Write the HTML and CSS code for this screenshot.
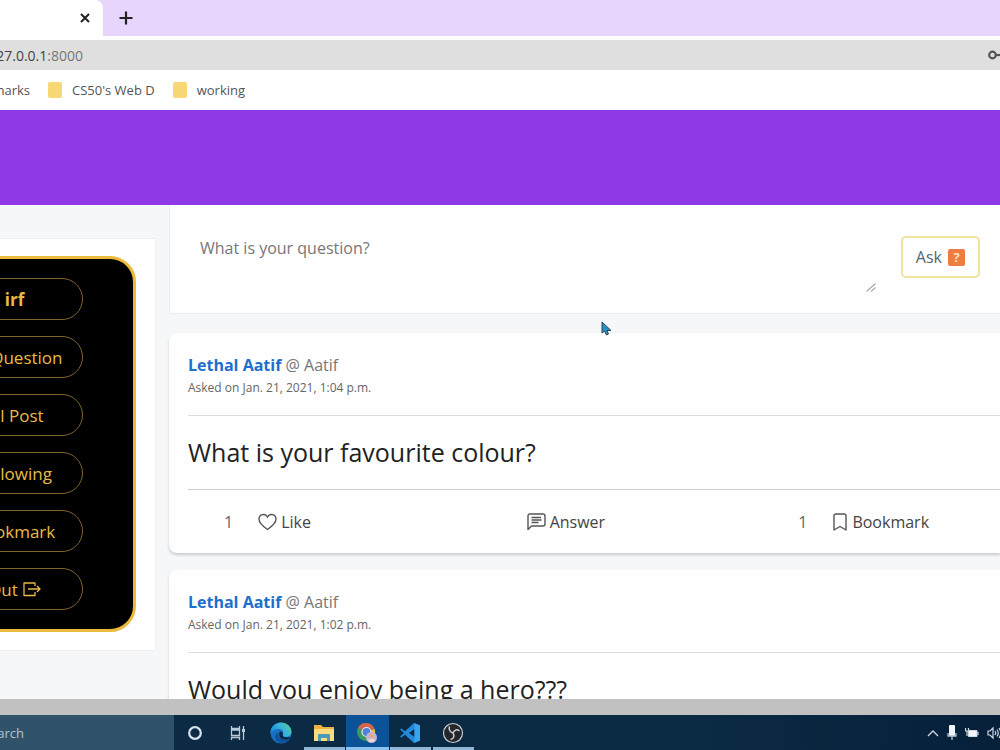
FILE: index.html
```html
<!DOCTYPE html>
<html lang="en">
<head>
    <meta charset="utf-8">
    <title>Questions</title>
    <link rel="stylesheet" href="styles.css">
</head>
<body>
    <header class="browser">
        <div class="tabs">
            <div class="tab">
                <button type="button" class="tab-btn" aria-label="Close tab">
                    <svg width="10" height="10" viewBox="0 0 10 10"><path d="M1 1l8 8M9 1L1 9" stroke="#222" stroke-width="2"/></svg>
                </button>
            </div>
            <button type="button" class="tab-btn new-tab" aria-label="New tab">
                <svg width="14" height="14" viewBox="0 0 14 14"><path d="M7 0.500v13M0.500 7h13" stroke="#222" stroke-width="2.200"/></svg>
            </button>
        </div>
        <div class="address">
            <div class="url"><span>127.0.0.1<span class="port">:8000</span></span></div>
            <svg width="13" height="14" viewBox="0 0 13 14" fill="none" stroke="#555" stroke-width="2.200"><circle cx="5.500" cy="7" r="3.300"/><path d="M9 7h5"/></svg>
        </div>
        <nav class="bookmarks">
            <a href="#" class="cut">Bookmarks</a>
            <a href="#"><i class="folder"></i>CS50's Web D</a>
            <a href="#"><i class="folder"></i>working</a>
        </nav>
    </header>

    <div class="navbar"></div>

    <div class="page">
        <aside class="sidebar">
            <nav class="menu">
                <a href="#" class="user">irf</a>
                <a href="#">All Question</a>
                <a href="#">All Post</a>
                <a href="#">Following</a>
                <a href="#">Bookmark</a>
                <a href="#">Out
                    <svg width="18" height="16" viewBox="0 0 18 16" fill="none" stroke="#e9bb45" stroke-width="1.300" stroke-linejoin="round"><path d="M12 5V2H1v12.500h11V11M5 8h12M14 5l3 3-3 3"/></svg>
                </a>
            </nav>
        </aside>

        <main class="feed">
            <form class="ask">
                <textarea placeholder="What is your question?" aria-label="Question"></textarea>
                <svg class="grip" width="10" height="10" viewBox="0 0 10 10"><path d="M0.500 9.500l9-8M5 9.500l4.500-4" stroke="#aaa" stroke-width="1.200"/></svg>
                <button type="button" class="ask-btn">Ask <span class="mark">?</span></button>
            </form>

            <article class="card">
                <div class="card-head">
                    <div class="author"><a href="#">Lethal Aatif</a> @ Aatif</div>
                    <div class="date">Asked on Jan. 21, 2021, 1:04 p.m.</div>
                </div>
                <h2>What is your favourite colour?</h2>
                <div class="actions">
                    <div class="action">
                        <span class="count">1</span>
                        <button type="button">
                            <svg width="19" height="18" viewBox="0 0 19 18" fill="none" stroke="#555" stroke-width="1.400"><path d="M9.500 16.500C4.500 13 1 10 1 6c0-5 6.500-6 8.500-2C11.500 0 18 1 18 6c0 4-3.500 7-8.500 10.500z"/></svg>
                            Like
                        </button>
                    </div>
                    <div class="action">
                        <button type="button">
                            <svg width="19" height="18" viewBox="0 0 19 18" fill="none" stroke="#555" stroke-width="1.400" stroke-linejoin="round"><path d="M1 16.500V3q0-2 2-2h13q2 0 2 2v8q0 2-2 2H4.500zM4.500 4.500h9.500M4.500 7h10M4.500 9.500h7"/></svg>
                            Answer
                        </button>
                    </div>
                    <div class="action">
                        <span class="count">1</span>
                        <button type="button">
                            <svg width="16" height="18" viewBox="0 0 16 18" fill="none" stroke="#555" stroke-width="1.400" stroke-linejoin="round"><path d="M2 17V3q0-2 2-2h8q2 0 2 2v14l-6-3.500z"/></svg>
                            Bookmark
                        </button>
                    </div>
                </div>
            </article>

            <article class="card">
                <div class="card-head">
                    <div class="author"><a href="#">Lethal Aatif</a> @ Aatif</div>
                    <div class="date">Asked on Jan. 21, 2021, 1:02 p.m.</div>
                </div>
                <h2>Would you enjoy being a hero???</h2>
            </article>
        </main>
    </div>

    <div class="scrollbar"></div>

    <footer class="taskbar">
        <div class="search"><span>Search</span></div>
        <button type="button" class="app" aria-label="Cortana">
            <svg width="16" height="16" viewBox="0 0 16 16"><circle cx="8" cy="8" r="5.800" fill="none" stroke="#d5e3ee" stroke-width="2.200"/></svg>
        </button>
        <button type="button" class="app" aria-label="Task view">
            <svg width="16" height="16" viewBox="0 0 16 16" fill="none" stroke="#b8cad8" stroke-width="1.300"><path d="M1.500 1v2.500h8V1M1.500 15v-2.500h8V15M1.500 5h8v5.500h-8zM13.500 1v14"/><path d="M13.500 4v3" stroke-width="3"/></svg>
        </button>
        <button type="button" class="app" aria-label="Edge">
            <svg width="22" height="22" viewBox="0 0 22 22">
                <defs>
                    <linearGradient id="edge" x1="0" y1="0.500" x2="1" y2="0"><stop offset="0" stop-color="#1b8ddb"/><stop offset="0.500" stop-color="#36b5dc"/><stop offset="1" stop-color="#63c978"/></linearGradient>
                </defs>
                <circle cx="11" cy="11" r="10.500" fill="#176fc1"/>
                <path d="M0.500 10C1 4 6 0.500 11 0.500c6 0 10.500 4.500 10.500 9 0 4-3 5.500-6 5.500-2.500 0-3.500-1-2.500-2.500C14 10 12.500 7 9 7 5 7 1.500 9 0.500 12z" fill="url(#edge)"/>
                <path d="M8.500 10.500c-1.500 5 3 8.500 10.500 6.500-4 6-13.500 4.500-14-2 0-2 1.500-4 3.500-4.500z" fill="#12509c"/>
                <path d="M10 9.500c2 0 3.500 1.500 2.800 3-.8 2 1 3.500 7.200 2.500l-1 2C12.500 19 7 15 10 9.500z" fill="#0b2740"/>
            </svg>
        </button>
        <button type="button" class="app open" aria-label="File Explorer">
            <svg width="22" height="20" viewBox="0 0 22 20"><path d="M1 2h7l2 2h11v13H1z" fill="#e9b444"/><path d="M1 6h20v12H1z" fill="#fbdc7c"/><path d="M5 18v-6q0-1 1-1h10q1 0 1 1v6h-3v-3H8v3z" fill="#4a9ab8"/></svg>
        </button>
        <button type="button" class="app open active" aria-label="Chrome">
            <svg width="22" height="22" viewBox="0 0 22 22"><circle cx="10" cy="10" r="9" fill="#3d9a5c"/><path d="M2 6a9 9 0 0 1 16.500 1L10 9z" fill="#d8634a"/><path d="M18.500 7A9 9 0 0 1 12 19l1-10z" fill="#e8bd4b"/><circle cx="10.500" cy="10" r="4.500" fill="#4d83dc" stroke="#dfe8f5" stroke-width="1.200"/><circle cx="15.500" cy="15.500" r="5.500" fill="#c9b2d8"/><circle cx="15.500" cy="14" r="2" fill="#e7a869"/><path d="M12 18.500q3.500-4 7 0-3.500 3-7 0z" fill="#e9dcc9"/></svg>
        </button>
        <button type="button" class="app open" aria-label="Code">
            <svg width="22" height="22" viewBox="0 0 22 22"><path d="M15 1l6 2.500v15L15 21 6 12.700 2.500 15.500 1 14.500 5 11 1 7.500l1.500-1L6 9.300zM15.500 7L10 11l5.500 4z" fill="#2389d8" fill-rule="evenodd"/><path d="M15.500 1.200l5.500 2.300v15l-5.500 2.300z" fill="#36a5ee"/></svg>
        </button>
        <button type="button" class="app open" aria-label="OBS">
            <svg width="22" height="22" viewBox="0 0 22 22"><circle cx="11" cy="11" r="9.500" fill="#23262b" stroke="#c9cfd4" stroke-width="1.200"/><path d="M7.500 4.500c-1 3 .5 5.500 3.500 6.500M17.500 9c-2.500-2-5-1.500-6.500 2M8.500 17.500c3-.5 4.500-3.500 2.500-6.500" fill="none" stroke="#c9cfd4" stroke-width="1.500"/></svg>
        </button>
        <div class="tray">
            <svg width="12" height="8" viewBox="0 0 12 8"><path d="M1 7l5-5 5 5" fill="none" stroke="#cfdae3" stroke-width="1.300"/></svg>
            <svg width="10" height="16" viewBox="0 0 10 16"><rect x="2" y="0" width="6" height="11" rx="1" fill="#f0f6fb"/><path d="M1 8v3h8V8M5 11v4" fill="none" stroke="#b7c7d4" stroke-width="1.300"/></svg>
            <svg width="14" height="12" viewBox="0 0 14 12"><path d="M3.500 3.500H12v6H3.500z" fill="#f0f6fb" stroke="#cfdae3"/><path d="M13 5v3M0.500 1v3h3V1M2 4v5" fill="none" stroke="#cfdae3" stroke-width="1.200"/></svg>
            <svg width="13" height="14" viewBox="0 0 13 14" fill="none" stroke="#cfdae3" stroke-width="1.200"><path d="M1 5h2l3-3v10L3 9H1zM8 5q1.500 2 0 4M10 3.500q2.500 3.500 0 7M12 2q3.500 5 0 10"/></svg>
        </div>
    </footer>

    <svg class="cursor" width="11" height="15" viewBox="0 0 11 15"><path d="M1 1v11l2.500-2 2 4 2-1-1.500-3.500H10z" fill="#2490c8" stroke="#345" stroke-width="1"/></svg>
</body>
</html>
```
FILE: styles.css
```css
* {
    box-sizing: border-box;
}

body {
    margin: 0;
    height: 100vh;
    display: flex;
    flex-direction: column;
    overflow: hidden;
    font-family: "Open Sans", "Noto Sans", sans-serif;
    font-size: 16px;
    color: #222;
    background: #f6f7f9;
}

a {
    text-decoration: none;
}

button {
    font: inherit;
    color: inherit;
    border: none;
    background: none;
    padding: 0;
}

svg {
    flex: none;
    display: block;
}

/* browser */
.browser {
    flex: none;
    background: #fff;
}

.tabs {
    display: flex;
    align-items: stretch;
    height: 36px;
    background: #e7d5fb;
}

.tab {
    display: flex;
    align-items: center;
    justify-content: flex-end;
    width: 103px;
    padding-right: 13px;
    background: #fff;
    border-top-right-radius: 8px;
}

.tab-btn {
    display: flex;
    align-items: center;
}

.new-tab {
    margin-left: 16px;
}

.address {
    display: flex;
    align-items: center;
    justify-content: space-between;
    height: 30px;
    margin-top: 4px;
    background: #dfdfdf;
    font-size: 14px;
    color: #444;
}

.url {
    display: flex;
    justify-content: flex-end;
    width: 83px;
    overflow: hidden;
    white-space: nowrap;
}

.port {
    color: #777;
}

.bookmarks {
    display: flex;
    align-items: center;
    gap: 18px;
    height: 40px;
    font-size: 13px;
}

.bookmarks a {
    display: flex;
    align-items: center;
    gap: 10px;
    color: #555;
}

.bookmarks .cut {
    justify-content: flex-end;
    width: 30px;
    overflow: hidden;
}

.folder {
    width: 14px;
    height: 16px;
    border-radius: 2px;
    background: #f8d775;
}

.navbar {
    flex: none;
    height: 95px;
    background: #8f39e6;
}

/* page */
.page {
    flex: 1;
    min-height: 0;
    display: flex;
    align-items: flex-start;
    gap: 13px;
    overflow: hidden;
}

.sidebar {
    flex: none;
    width: 156px;
    margin-top: 33px;
    padding: 17px 19px 18px 0;
    background: #fff;
    border: 1px solid #eef0f1;
    border-left: none;
    overflow: hidden;
}

.menu {
    display: flex;
    flex-direction: column;
    gap: 16px;
    margin-left: -80px;
    padding: 19px 50px 19px 23px;
    background: #000;
    border: 3px solid #eabb3a;
    border-radius: 26px;
    font-size: 17px;
}

.menu a {
    display: flex;
    align-items: center;
    justify-content: center;
    gap: 5px;
    height: 42px;
    border: 1px solid #806530;
    border-radius: 21px;
    color: #e9bb45;
    white-space: nowrap;
}

.menu .user {
    font-weight: bold;
}

.feed {
    flex: 1;
    min-width: 0;
    display: flex;
    flex-direction: column;
}

.ask {
    display: flex;
    align-items: flex-start;
    height: 109px;
    margin-bottom: 19px;
    padding: 31px 20px 0 30px;
    background: #fefefe;
    border: 1px solid #eceef0;
    border-top: none;
    border-right: none;
}

.ask textarea {
    flex: 1;
    height: 56px;
    padding: 0;
    border: none;
    outline: none;
    resize: none;
    background: none;
    font: inherit;
    line-height: 24px;
}

.ask textarea::placeholder {
    color: #777;
}

.grip {
    align-self: flex-start;
    margin: 46px 25px 0 0;
}

.ask-btn {
    display: flex;
    align-items: center;
    gap: 6px;
    height: 42px;
    padding: 0 13px;
    border: 2px solid #f0e3a0;
    border-radius: 5px;
    color: #53696e;
}

.mark {
    width: 17px;
    height: 17px;
    border-radius: 2px;
    background: #ef7d42;
    color: #ffe2b8;
    font-size: 13px;
    font-weight: bold;
    line-height: 17px;
    text-align: center;
}

.card {
    margin-bottom: 17px;
    padding-left: 19px;
    background: #fefefe;
    border-radius: 8px 0 0 8px;
    box-shadow: 0 2px 3px rgba(0, 0, 0, 0.18);
}

.card-head {
    height: 83px;
    padding-top: 20px;
    border-bottom: 1px solid #dcdcdc;
}

.author {
    line-height: 24px;
    color: #777;
}

.author a {
    color: #1c6fce;
    font-weight: bold;
}

.date {
    font-size: 12px;
    line-height: 22px;
    color: #666;
}

.card h2 {
    margin: 0;
    font-size: 25px;
    font-weight: normal;
    line-height: 73px;
    border-bottom: 1px solid #ccc;
}

.actions {
    display: grid;
    grid-template-columns: 39fr 35fr 26fr;
    height: 63px;
    padding-left: 36px;
}

.action,
.action button {
    display: flex;
    align-items: center;
}

.action {
    gap: 25px;
    color: #444;
}

.action button {
    gap: 4px;
}

.count {
    color: #666;
}

.scrollbar {
    flex: none;
    height: 16px;
    background: #c1c1c1;
}

/* taskbar */
.taskbar {
    flex: none;
    display: flex;
    height: 35px;
    background: linear-gradient(90deg, #0c2a44, #0b2a43 70%, #06203a);
}

.search {
    display: flex;
    align-items: center;
    width: 174px;
    overflow: hidden;
    background: #31526b;
    color: #b4c3cf;
    font-size: 13px;
}

.search span {
    display: flex;
    justify-content: flex-end;
    width: 24px;
}

.app {
    display: flex;
    align-items: center;
    justify-content: center;
    width: 43px;
    padding: 3px 2px 0 0;
    border-bottom: 3px solid transparent;
}

.open {
    border-image: linear-gradient(90deg, transparent 8%, #91b7d8 8%, #91b7d8 92%, transparent 92%) 3;
}

.active {
    background: #0c5296;
    border-image: none;
    border-bottom-color: #8ec2f0;
}

.tray {
    display: flex;
    align-items: center;
    gap: 8px;
    margin-left: auto;
}

/* mouse pointer over the page */
.cursor {
    position: absolute;
    left: 601px;
    top: 321px;
}
```
